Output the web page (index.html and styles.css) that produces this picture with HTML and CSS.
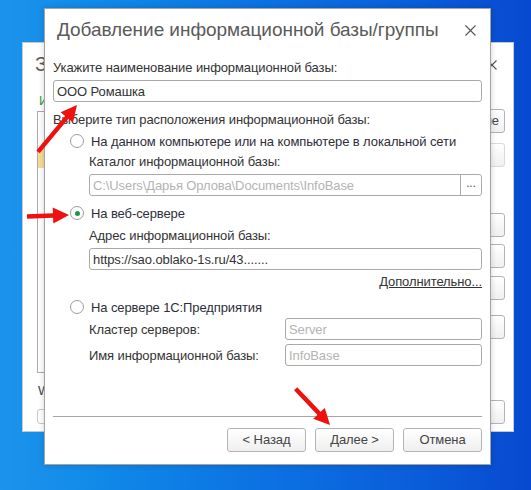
FILE: index.html
```html
<!DOCTYPE html>
<html lang="ru">
<head>
<meta charset="utf-8">
<title>Добавление информационной базы/группы</title>
<link rel="stylesheet" href="styles.css">
</head>
<body>
<div class="desk">
  <div class="win bg-win">
    <div class="bg-titlebar">
      <span class="bg-title">З</span>
      <svg class="bg-close" width="10" height="10" viewBox="0 0 10 10"><path d="M0.5 0.5L9.5 9.5M9.5 0.5L0.5 9.5" stroke="#555" stroke-width="1.1" fill="none"/></svg>
    </div>
    <div class="bg-body">
      <div class="bg-main">
        <div class="bg-caption">И</div>
        <div class="bg-list"><div class="bg-row"></div></div>
        <div class="bg-foot-label">W</div>
        <div class="bg-foot-field"></div>
      </div>
      <div class="bg-buttons">
        <div class="bg-btn b1">Предприятие</div>
        <div class="bg-btn b2 off"></div>
        <div class="bg-btn b3"></div>
        <div class="bg-btn b4"></div>
        <div class="bg-btn b5"></div>
        <div class="bg-btn b6"></div>
        <div class="bg-btn b7"></div>
      </div>
    </div>
  </div>

  <div class="win dlg">
    <div class="dlg-titlebar">
      <span class="dlg-title">Добавление информационной базы/группы</span>
      <svg class="dlg-close" width="11" height="11" viewBox="0 0 11 11"><path d="M0.5 0.5L10.5 10.5M10.5 0.5L0.5 10.5" stroke="#555" stroke-width="1.1" fill="none"/></svg>
    </div>
    <div class="dlg-body">
      <div class="lbl l-name">Укажите наименование информационной базы:</div>
      <div class="field f-name"><span class="val">ООО Ромашка</span></div>
      <div class="lbl l-type">Выберите тип расположения информационной базы:</div>

      <div class="radio-row r1"><span class="radio"></span><span class="rtext">На данном компьютере или на компьютере в локальной сети</span></div>
      <div class="lbl sub l-cat">Каталог информационной базы:</div>
      <div class="field sub f-cat"><span class="val dim">C:\Users\Дарья Орлова\Documents\InfoBase</span><span class="dots">...</span></div>

      <div class="radio-row r2"><span class="radio on"></span><span class="rtext">На веб-сервере</span></div>
      <div class="lbl sub l-url">Адрес информационной базы:</div>
      <div class="field sub f-url"><span class="val">https://sao.oblako-1s.ru/43.......</span></div>
      <div class="more"><span class="link">Дополнительно...</span></div>

      <div class="radio-row r3"><span class="radio"></span><span class="rtext">На сервере 1С:Предприятия</span></div>
      <div class="pair p1"><span class="plabel">Кластер серверов:</span><div class="field pf"><span class="val ph">Server</span></div></div>
      <div class="pair p2"><span class="plabel">Имя информационной базы:</span><div class="field pf"><span class="val ph">InfoBase</span></div></div>

      <div class="sep"></div>
      <div class="btns">
        <div class="btn">&lt; Назад</div>
        <div class="btn">Далее &gt;</div>
        <div class="btn">Отмена</div>
      </div>
    </div>
  </div>

  <svg class="arrows" width="531" height="490" viewBox="0 0 531 490">
    <g fill="#ef1010">
      <polygon transform="translate(77,105) rotate(-50.3)" points="-61,-2.2 -16,-2.2 -16,-8 0,0 -16,8 -16,2.2 -61,2.2"/>
      <polygon transform="translate(69,215) rotate(-2)" points="-42,-2.2 -16,-2.2 -16,-8 0,0 -16,8 -16,2.2 -42,2.2"/>
      <polygon transform="translate(330,425) rotate(46.6)" points="-50,-2.2 -16,-2.2 -16,-8 0,0 -16,8 -16,2.2 -50,2.2"/>
    </g>
  </svg>
</div>
</body>
</html>
```

FILE: styles.css
```css
html, body {
  margin: 0;
  padding: 0;
}
body {
  font-family: "Liberation Sans", Arial, sans-serif;
  font-size: 13px;
  letter-spacing: -0.1px;
  color: #333;
}
.desk {
  position: relative;
  width: 531px;
  height: 490px;
  overflow: hidden;
  background: linear-gradient(90deg, #1c94ec 0%, #1088e8 20%, #0c72e2 50%, #0a5cd9 80%, #0749d0 100%);
}
.win {
  position: absolute;
  box-sizing: border-box;
  background: #fff;
}

/* background window */
.bg-win {
  left: 22px;
  top: 42px;
  width: 492px;
  height: 390px;
  border: 1px solid #c9c9c9;
  display: flex;
  flex-direction: column;
}
.bg-titlebar {
  height: 42px;
  display: flex;
  align-items: center;
  justify-content: space-between;
  padding: 0 16px 0 12px;
}
.bg-title {
  font-size: 20px;
  color: #595959;
  white-space: nowrap;
}
.bg-close {
  display: block;
  margin-top: 2px;
}
.bg-body {
  display: flex;
  padding: 0 8px 0 14px;
  gap: 8px;
}
.bg-main {
  flex: 1;
  display: flex;
  flex-direction: column;
}
.bg-caption {
  margin-top: 8px;
  padding-left: 2px;
  line-height: 16px;
  color: #2e9a3c;
}
.bg-list {
  margin-top: 2px;
  height: 262px;
  box-sizing: border-box;
  border: 1px solid #ababab;
}
.bg-row {
  margin-top: 36px;
  height: 20px;
  background: #f6dd95;
}
.bg-foot-label {
  margin-top: 10px;
  padding-left: 1px;
  line-height: 16px;
  color: #444;
}
.bg-foot-field {
  margin-top: 10px;
  height: 15px;
  box-sizing: border-box;
  border: 1px solid #c8c8c8;
  border-radius: 3px;
}
.bg-buttons {
  width: 107px;
  display: flex;
  flex-direction: column;
}
.bg-btn {
  height: 24px;
  box-sizing: border-box;
  border: 1px solid #b4b4b4;
  border-radius: 3px;
  background: linear-gradient(#ffffff, #f0f0f0);
  text-align: right;
  padding-right: 5px;
  line-height: 22px;
  white-space: nowrap;
  overflow: hidden;
  color: #444;
}
.bg-btn.off {
  border-color: #dadada;
  color: #aaa;
}
.b1 { margin-top: 24px; }
.b2 { margin-top: 10px; }
.b3 { margin-top: 46px; }
.b4 { margin-top: 7px; }
.b5 { margin-top: 8px; }
.b6 { margin-top: 15px; }
.b7 { margin-top: 61px; }

/* dialog */
.dlg {
  left: 44px;
  top: 8px;
  width: 447px;
  height: 457px;
  border: 1px solid #a3a3a3;
  box-shadow: 0 0 6px rgba(0, 0, 0, 0.18);
  display: flex;
  flex-direction: column;
}
.dlg-titlebar {
  height: 41px;
  display: flex;
  align-items: center;
  justify-content: space-between;
  padding: 0 14px 0 12px;
}
.dlg-title {
  font-size: 19px;
  letter-spacing: -0.05px;
  color: #5a5a5a;
  white-space: nowrap;
}
.dlg-close {
  display: block;
  margin-top: 1px;
}
.dlg-body {
  display: flex;
  flex-direction: column;
  padding: 0 8px 11px 8px;
}
.lbl {
  line-height: 16px;
  white-space: nowrap;
}
.sub {
  margin-left: 36px;
}
.l-name { margin-top: 10px; }
.l-type { margin-top: 10px; }
.l-cat { margin-top: 5px; }
.l-url { margin-top: 7px; }

.field {
  height: 22px;
  box-sizing: border-box;
  border: 1px solid #aaaaaa;
  border-radius: 3px;
  display: flex;
  align-items: center;
  background: #fff;
}
.val {
  flex: 1;
  padding-left: 3px;
  white-space: nowrap;
  overflow: hidden;
  color: #333;
}
.val.dim, .val.ph {
  color: #b3b3b3;
}
.f-name { margin-top: 4px; }
.f-cat { margin-top: 4px; }
.f-url { margin-top: 4px; }
.dots {
  width: 20px;
  align-self: stretch;
  border-left: 1px solid #aaaaaa;
  text-align: center;
  line-height: 16px;
  color: #555;
  font-size: 12px;
}

.radio-row {
  display: flex;
  align-items: center;
  height: 16px;
  margin-left: 17px;
  gap: 7px;
}
.r1 { margin-top: 5px; }
.r2 { margin-top: 9px; }
.r3 { margin-top: 9px; }
.radio {
  width: 14px;
  height: 14px;
  box-sizing: border-box;
  border: 1px solid #9c9c9c;
  border-radius: 50%;
  display: flex;
  align-items: center;
  justify-content: center;
  background: #fff;
}
.radio.on::after {
  content: "";
  width: 5px;
  height: 5px;
  border-radius: 50%;
  background: #1f9a4c;
}
.rtext {
  white-space: nowrap;
  color: #2e2e3a;
}

.more {
  margin-top: 4px;
  line-height: 16px;
  text-align: right;
}
.link {
  text-decoration: underline;
  color: #333;
}

.pair {
  margin-left: 36px;
  display: flex;
  align-items: center;
}
.p1 { margin-top: 3px; }
.p2 { margin-top: 4px; }
.plabel {
  flex: 1;
  white-space: nowrap;
}
.pf {
  width: 197px;
}

.sep {
  margin-top: 50px;
  height: 1px;
  background: #a6a6a6;
}
.btns {
  margin-top: 11px;
  display: flex;
  justify-content: flex-end;
  gap: 9px;
}
.btn {
  width: 79px;
  height: 24px;
  box-sizing: border-box;
  border: 1px solid #b4b4b4;
  border-radius: 3px;
  background: linear-gradient(#ffffff, #efefef);
  text-align: center;
  line-height: 22px;
  color: #444;
}

.arrows {
  position: absolute;
  left: 0;
  top: 0;
  pointer-events: none;
}
```
